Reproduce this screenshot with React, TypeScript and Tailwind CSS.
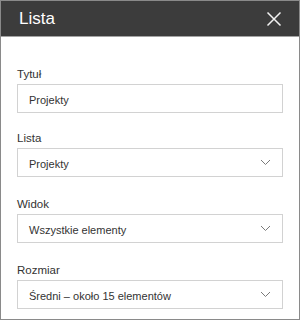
import React from "react";

function Chevron() {
  return (
    <svg width="11" height="7" viewBox="0 0 11 7" className="shrink-0">
      <path d="M1 1 L5.5 5.5 L10 1" fill="none" stroke="#7a7a7a" strokeWidth="1" />
    </svg>
  );
}

function Field({ label, value, select, className }: { label: string; value: string; select?: boolean; className?: string }) {
  return (
    <div className={"flex flex-col " + (className ?? "")}>
      <div className="text-[11.5px] leading-[16px] text-[#333333] mb-[2px]">{label}</div>
      <div className="h-[29px] border border-[#d2d2d2] bg-white flex items-start justify-between pl-[11px] pr-[11px]">
        <span className="pt-[7px] text-[11px] leading-[16px] text-[#333333]">{value}</span>
        {select && (
          <span className="pt-[10px]">
            <Chevron />
          </span>
        )}
      </div>
    </div>
  );
}

export default function App() {
  return (
    <div className="w-[302px] h-[321px] bg-white font-['Liberation_Sans',Arial,sans-serif]">
      <div className="w-[300px] h-[320px] border border-[#8a8a8a] flex flex-col bg-white">
        <div className="h-[36px] bg-[#3c3c3c] border-b border-[#a3a3a3] flex items-center justify-between pl-[18px] pr-[16px]">
          <span className="text-[17px] leading-[22px] text-white">Lista</span>
          <svg width="16" height="16" viewBox="0 0 16 16" className="mr-[1px]">
            <path d="M1.5 1.5 L14.5 14.5 M14.5 1.5 L1.5 14.5" stroke="#f2f2f2" strokeWidth="1.5" fill="none" />
          </svg>
        </div>
        <div className="flex flex-col px-[16px] pt-[29px]">
          <Field label="Tytuł" value="Projekty" />
          <Field label="Lista" value="Projekty" select className="mt-[17px]" />
          <Field label="Widok" value="Wszystkie elementy" select className="mt-[19px]" />
          <Field label="Rozmiar" value="Średni – około 15 elementów" select className="mt-[19px]" />
        </div>
      </div>
    </div>
  );
}
